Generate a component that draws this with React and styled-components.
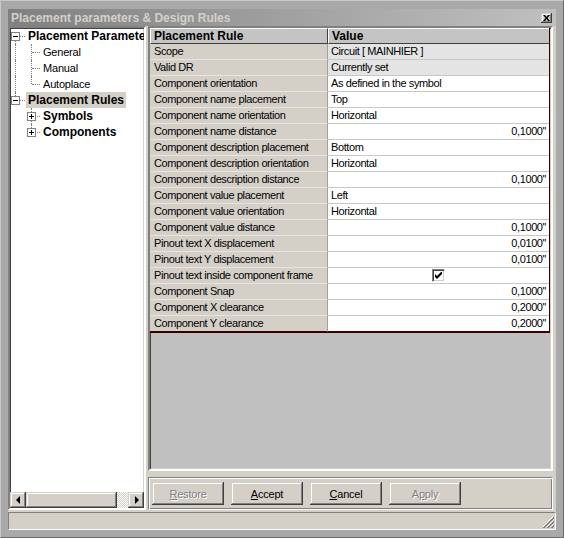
import React from 'react';
import styled, { createGlobalStyle } from 'styled-components';

const GlobalStyle = createGlobalStyle`
  * {
    box-sizing: border-box;
    margin: 0;
    padding: 0;
  }

  html, body, #root {
    width: 100%;
    height: 100%;
    overflow: hidden;
  }

  body {
    font-family: 'Liberation Sans', Arial, sans-serif;
    font-size: 11px;
    color: #000;
    background: #a9a9a9;
  }
`;

const raised = `
  box-shadow: inset -1px -1px #404040, inset 1px 1px #d4d0c8,
    inset -2px -2px #808080, inset 2px 2px #ffffff;
`;

const sunken = `
  border: 1px solid;
  border-color: #808080 #ffffff #ffffff #808080;
  box-shadow: inset 1px 1px #404040, inset -1px -1px #d4d0c8;
`;

const Frame = styled.div`
  width: 564px;
  height: 538px;
  background: #a9a9a9;
  border: 1px solid;
  border-color: #c8c8c8 #6a6a6a #6a6a6a #c8c8c8;
  padding: 8px 7px 7px 7px;
  display: flex;
  flex-direction: column;
`;

const TitleBar = styled.div`
  height: 17px;
  flex: none;
  display: flex;
  align-items: center;
  justify-content: space-between;
  padding: 0 4px 0 3px;
  background: linear-gradient(90deg, #808080 0%, #c0c0c0 100%);
`;

const Title = styled.span`
  color: #d4d0c8;
  font-size: 12px;
  font-weight: 700;
  white-space: nowrap;
`;

const CloseButton = styled.span`
  width: 11px;
  height: 10px;
  display: flex;
  align-items: center;
  justify-content: center;
  background: #d4d0c8;
  ${raised}
`;

const Client = styled.div`
  flex: 1;
  display: flex;
  flex-direction: column;
  background: #d4d0c8;
`;

const Body = styled.div`
  height: 484px;
  flex: none;
  display: flex;
  gap: 2px;
`;

const TreePanel = styled.div`
  width: 138px;
  flex: none;
  display: flex;
  flex-direction: column;
  background: #fff;
  border: 2px solid;
  border-color: #808080 #ffffff #ffffff #808080;
  box-shadow: inset 1px 1px #404040, inset -1px -1px #d4d0c8;
  overflow: hidden;
`;

const TreeList = styled.div`
  flex: 1;
  overflow: hidden;
  padding-left: 0;
`;

const TreeRow = styled.div`
  height: 16px;
  display: flex;
  align-items: center;
  white-space: nowrap;
`;

const Guide = styled.span`
  position: relative;
  flex: none;
  width: ${p => p.$w}px;
  height: 16px;

  &::before {
    content: '';
    display: ${p => (p.$line === 'none' ? 'none' : 'block')};
    position: absolute;
    left: ${p => p.$x}px;
    top: ${p => (p.$line === 'bottom' ? 8 : 0)}px;
    bottom: ${p => (p.$line === 'top' ? 8 : 0)}px;
    border-left: 1px dotted #808080;
  }

  &::after {
    content: '';
    display: ${p => (p.$branch ? 'block' : 'none')};
    position: absolute;
    left: ${p => p.$x + 1}px;
    right: 1px;
    top: 8px;
    border-top: 1px dotted #808080;
  }
`;

const Expander = styled.span`
  position: absolute;
  left: ${p => p.$x - 4}px;
  top: 4px;
  width: 9px;
  height: 9px;
  background: #fff;
  border: 1px solid #808080;
  z-index: 1;

  &::before {
    content: '';
    position: absolute;
    left: 1px;
    right: 1px;
    top: 3px;
    height: 1px;
    background: #000;
  }

  &::after {
    content: '';
    display: ${p => (p.$open ? 'none' : 'block')};
    position: absolute;
    top: 1px;
    bottom: 1px;
    left: 3px;
    width: 1px;
    background: #000;
  }
`;

const TreeLabel = styled.span`
  height: 16px;
  line-height: 16px;
  padding: 0 2px;
  font-size: ${p => (p.$bold ? 12 : 11)}px;
  font-weight: ${p => (p.$bold ? 700 : 400)};
  background: ${p => (p.$selected ? '#d4d0c8' : 'transparent')};
  letter-spacing: ${p => (p.$bold ? 0 : -0.2)}px;
`;

const HScroll = styled.div`
  height: 16px;
  flex: none;
  display: flex;
`;

const ScrollButton = styled.span`
  width: 16px;
  height: 16px;
  flex: none;
  display: flex;
  align-items: center;
  justify-content: center;
  background: #d4d0c8;
  ${raised}
`;

const Arrow = styled.span`
  width: 0;
  height: 0;
  border-top: 4px solid transparent;
  border-bottom: 4px solid transparent;
  ${p => (p.$dir === 'left' ? 'border-right: 4px solid #000; margin-right: 1px;' : 'border-left: 4px solid #000; margin-left: 1px;')}
`;

const Thumb = styled.span`
  width: 91px;
  height: 16px;
  flex: none;
  background: #d4d0c8;
  ${raised}
`;

const Track = styled.span`
  flex: 1;
  height: 16px;
  background-color: #d4d0c8;
  background-image: conic-gradient(#ffffff 25%, #d4d0c8 0 50%, #ffffff 0 75%, #d4d0c8 0);
  background-size: 2px 2px;
`;

const RightColumn = styled.div`
  width: 405px;
  flex: none;
  display: flex;
  flex-direction: column;
  gap: 6px;
`;

const GridBox = styled.div`
  flex: 1;
  background: #c0c0c0;
  border: 2px solid;
  border-color: #808080 #ffffff #ffffff #808080;
  box-shadow: inset 1px 1px #404040, inset -1px -1px #d4d0c8;
  overflow: hidden;
`;

const Table = styled.div`
  width: 400px;
  display: grid;
  grid-template-columns: 178px 1fr;
  border-right: 1px solid #3a0000;
  border-bottom: 1px solid #3a0000;
  letter-spacing: -0.4px;
`;

const HeadCell = styled.div`
  height: 16px;
  line-height: 14px;
  padding-left: 3px;
  font-size: 12px;
  font-weight: 700;
  letter-spacing: 0;
  background: #c4c4c4;
  border-top: 1px solid #fff;
  border-left: 1px solid #fff;
  border-bottom: 1px solid #404040;
  border-right: ${p => (p.$last ? 'none' : '1px solid #404040')};
`;

const NameCell = styled.div`
  height: 16px;
  line-height: 15px;
  padding-left: 4px;
  background: #d4d0c8;
  border-bottom: 1px solid ${p => (p.$last ? '#3a0000' : '#e6e4de')};
  border-right: 1px solid #a0a0a0;
  white-space: nowrap;
`;

const ValueCell = styled.div`
  height: 16px;
  line-height: 15px;
  padding: 0 3px 0 3px;
  background: ${p => (p.$shaded ? '#e4e4e4' : '#ffffff')};
  border-bottom: 1px solid ${p => (p.$last ? '#3a0000' : '#c8c8c8')};
  display: flex;
  align-items: center;
  justify-content: ${p => (p.$align === 'right' ? 'flex-end' : p.$align === 'center' ? 'center' : 'flex-start')};
  white-space: nowrap;
`;

const CheckBox = styled.span`
  width: 13px;
  height: 13px;
  display: flex;
  align-items: center;
  justify-content: center;
  background: #fff;
  ${sunken}
`;

const ButtonPanel = styled.div`
  height: 33px;
  flex: none;
  display: flex;
  align-items: flex-start;
  gap: 7px;
  padding: 4px 3px;
  border: 1px solid;
  border-color: #808080 #ffffff #ffffff #808080;
  box-shadow: inset 1px 1px #ffffff, inset -1px -1px #808080;
`;

const PushButton = styled.button`
  width: 72px;
  height: 23px;
  border: none;
  background: #d4d0c8;
  font-family: 'Liberation Sans', Arial, sans-serif;
  font-size: 11px;
  letter-spacing: -0.2px;
  color: ${p => (p.disabled ? '#808080' : '#000')};
  text-shadow: ${p => (p.disabled ? '1px 1px #ffffff' : 'none')};
  ${raised}
`;

const StatusBar = styled.div`
  height: 18px;
  flex: none;
  margin-top: 2px;
  display: flex;
  justify-content: flex-end;
  align-items: flex-end;
  padding: 0 1px 1px 0;
  border: 1px solid;
  border-color: #808080 #ffffff #ffffff #808080;
`;

const rules = [
  ['Scope', 'Circuit [ MAINHIER ]', 'left', true],
  ['Valid DR', 'Currently set', 'left', true],
  ['Component orientation', 'As defined in the symbol', 'left'],
  ['Component name placement', 'Top', 'left'],
  ['Component name orientation', 'Horizontal', 'left'],
  ['Component name distance', "0,1000''", 'right'],
  ['Component description placement', 'Bottom', 'left'],
  ['Component description orientation', 'Horizontal', 'left'],
  ['Component description distance', "0,1000''", 'right'],
  ['Component value placement', 'Left', 'left'],
  ['Component value orientation', 'Horizontal', 'left'],
  ['Component value distance', "0,1000''", 'right'],
  ['Pinout text X displacement', "0,0100''", 'right'],
  ['Pinout text Y displacement', "0,0100''", 'right'],
  ['Pinout text inside component frame', 'check', 'center'],
  ['Component Snap', "0,1000''", 'right'],
  ['Component X clearance', "0,2000''", 'right'],
  ['Component Y clearance', "0,2000''", 'right'],
];

const CloseIcon = () => (
  <svg width="7" height="6" viewBox="0 0 7 6">
    <path d="M0 0h2l1.5 2 1.5-2h2L4.5 3 7 6H5L3.5 4 2 6H0l2.5-3z" fill="#000" />
  </svg>
);

const CheckIcon = () => (
  <svg width="7" height="7" viewBox="0 0 7 7">
    <path d="M0 2v3l2 2 5-5V-1L2 4z" fill="#000" />
  </svg>
);

const Grip = () => (
  <svg width="12" height="12" viewBox="0 0 12 12">
    <path d="M11 1L1 11M11 5L5 11M11 9L9 11" stroke="#ffffff" strokeWidth="1" />
    <path d="M12 1L1 12M12 2L2 12M12 5L5 12M12 6L6 12M12 9L9 12M12 10L10 12" stroke="#808080" strokeWidth="1" />
  </svg>
);

const Top = ({ label, open, line, selected }) => (
  <TreeRow>
    <Guide $w={16} $x={5} $line={line} $branch>
      <Expander $x={5} $open={open} />
    </Guide>
    <TreeLabel $bold $selected={selected}>{label}</TreeLabel>
  </TreeRow>
);

const Child = ({ label, outer, line, box, bold }) => (
  <TreeRow>
    <Guide $w={16} $x={5} $line={outer} />
    <Guide $w={15} $x={5} $line={line} $branch>
      {box && <Expander $x={5} $open={false} />}
    </Guide>
    <TreeLabel $bold={bold}>{label}</TreeLabel>
  </TreeRow>
);

const App = () => (
  <>
    <GlobalStyle />
    <Frame>
      <TitleBar>
        <Title>Placement parameters &amp; Design Rules</Title>
        <CloseButton><CloseIcon /></CloseButton>
      </TitleBar>
      <Client>
        <Body>
          <TreePanel>
            <TreeList>
              <Top label="Placement Parameters" open line="bottom" />
              <Child label="General" outer="full" line="full" />
              <Child label="Manual" outer="full" line="full" />
              <Child label="Autoplace" outer="full" line="top" />
              <Top label="Placement Rules" open line="top" selected />
              <Child label="Symbols" outer="none" line="full" box bold />
              <Child label="Components" outer="none" line="top" box bold />
            </TreeList>
            <HScroll>
              <ScrollButton><Arrow $dir="left" /></ScrollButton>
              <Thumb />
              <Track />
              <ScrollButton><Arrow $dir="right" /></ScrollButton>
            </HScroll>
          </TreePanel>
          <RightColumn>
            <GridBox>
              <Table>
                <HeadCell>Placement Rule</HeadCell>
                <HeadCell $last>Value</HeadCell>
                {rules.map(([name, value, align, shaded], i) => {
                  const last = i === rules.length - 1;
                  return (
                    <React.Fragment key={name}>
                      <NameCell $last={last}>{name}</NameCell>
                      <ValueCell $last={last} $align={align} $shaded={shaded}>
                        {value === 'check' ? <CheckBox><CheckIcon /></CheckBox> : value}
                      </ValueCell>
                    </React.Fragment>
                  );
                })}
              </Table>
            </GridBox>
            <ButtonPanel>
              <PushButton disabled><u>R</u>estore</PushButton>
              <PushButton><u>A</u>ccept</PushButton>
              <PushButton><u>C</u>ancel</PushButton>
              <PushButton disabled>A<u>p</u>ply</PushButton>
            </ButtonPanel>
          </RightColumn>
        </Body>
        <StatusBar><Grip /></StatusBar>
      </Client>
    </Frame>
  </>
);

export default App;
